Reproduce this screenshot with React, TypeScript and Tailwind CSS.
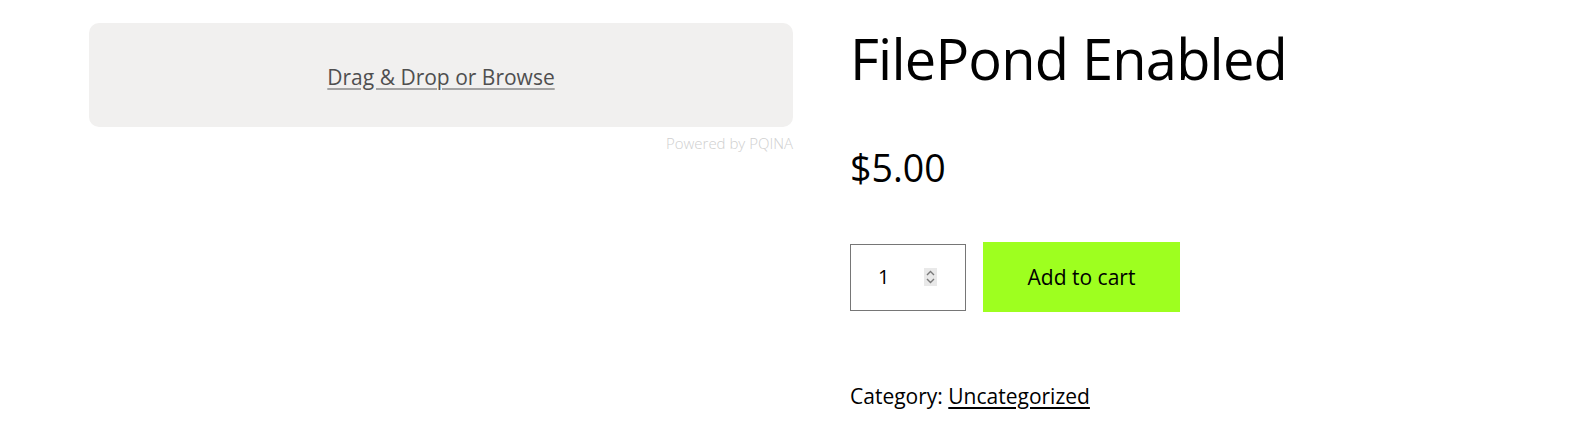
import React from "react";

export default function App() {
  const font = { fontFamily: '"Open Sans", "Noto Sans", sans-serif' };
  return (
    <div className="w-[1573px] h-[442px] bg-white text-black overflow-hidden" style={font}>
      <div className="flex pl-[89px]">
        {/* Left column: FilePond */}
        <div className="w-[704px] pt-[23px]">
          <div className="h-[104px] rounded-[10px] bg-[#f1f0ef] flex items-center justify-center pt-[3px]">
            <span className="text-[21px] leading-[28px] text-[#4f4f4f] underline decoration-[#a3a3a3] underline-offset-[3px]">
              Drag &amp; Drop or Browse
            </span>
          </div>
          <div className="mt-[7px] text-right text-[15px] leading-[18px] font-light text-[#cfcfcf]">
            Powered by PQINA
          </div>
        </div>

        {/* Right column: product summary */}
        <div className="ml-[57px] flex flex-col">
          <h1 className="mt-[26px] text-[56px] leading-[64px] font-normal tracking-[-0.8px]">FilePond Enabled</h1>
          <div className="mt-[56px] text-[37.5px] leading-[44px]">$5.00</div>
          <div className="mt-[52px] flex items-center h-[70px]">
            <div className="w-[116px] h-[67px] border border-[#767676] flex items-center pl-[27px] pr-[28px]">
              <span className="text-[20px] leading-[28px] flex-1">1</span>
              <div className="w-[13px] h-[18px] bg-[#e9e9e9] flex flex-col items-center justify-center gap-[2px]">
                <svg width="9" height="6" viewBox="0 0 9 6" fill="none">
                  <path d="M1 5 L4.5 1.5 L8 5" stroke="#7a7a7a" strokeWidth="1.4" />
                </svg>
                <svg width="9" height="6" viewBox="0 0 9 6" fill="none">
                  <path d="M1 1 L4.5 4.5 L8 1" stroke="#7a7a7a" strokeWidth="1.4" />
                </svg>
              </div>
            </div>
            <button className="ml-[17px] w-[197px] h-[70px] bg-[#9eff1f] text-[21px] leading-[28px] text-black">
              Add to cart
            </button>
          </div>
          <div className="mt-[70px] text-[21px] leading-[28px]">
            Category: <span className="underline underline-offset-[3px]">Uncategorized</span>
          </div>
        </div>
      </div>
    </div>
  );
}
